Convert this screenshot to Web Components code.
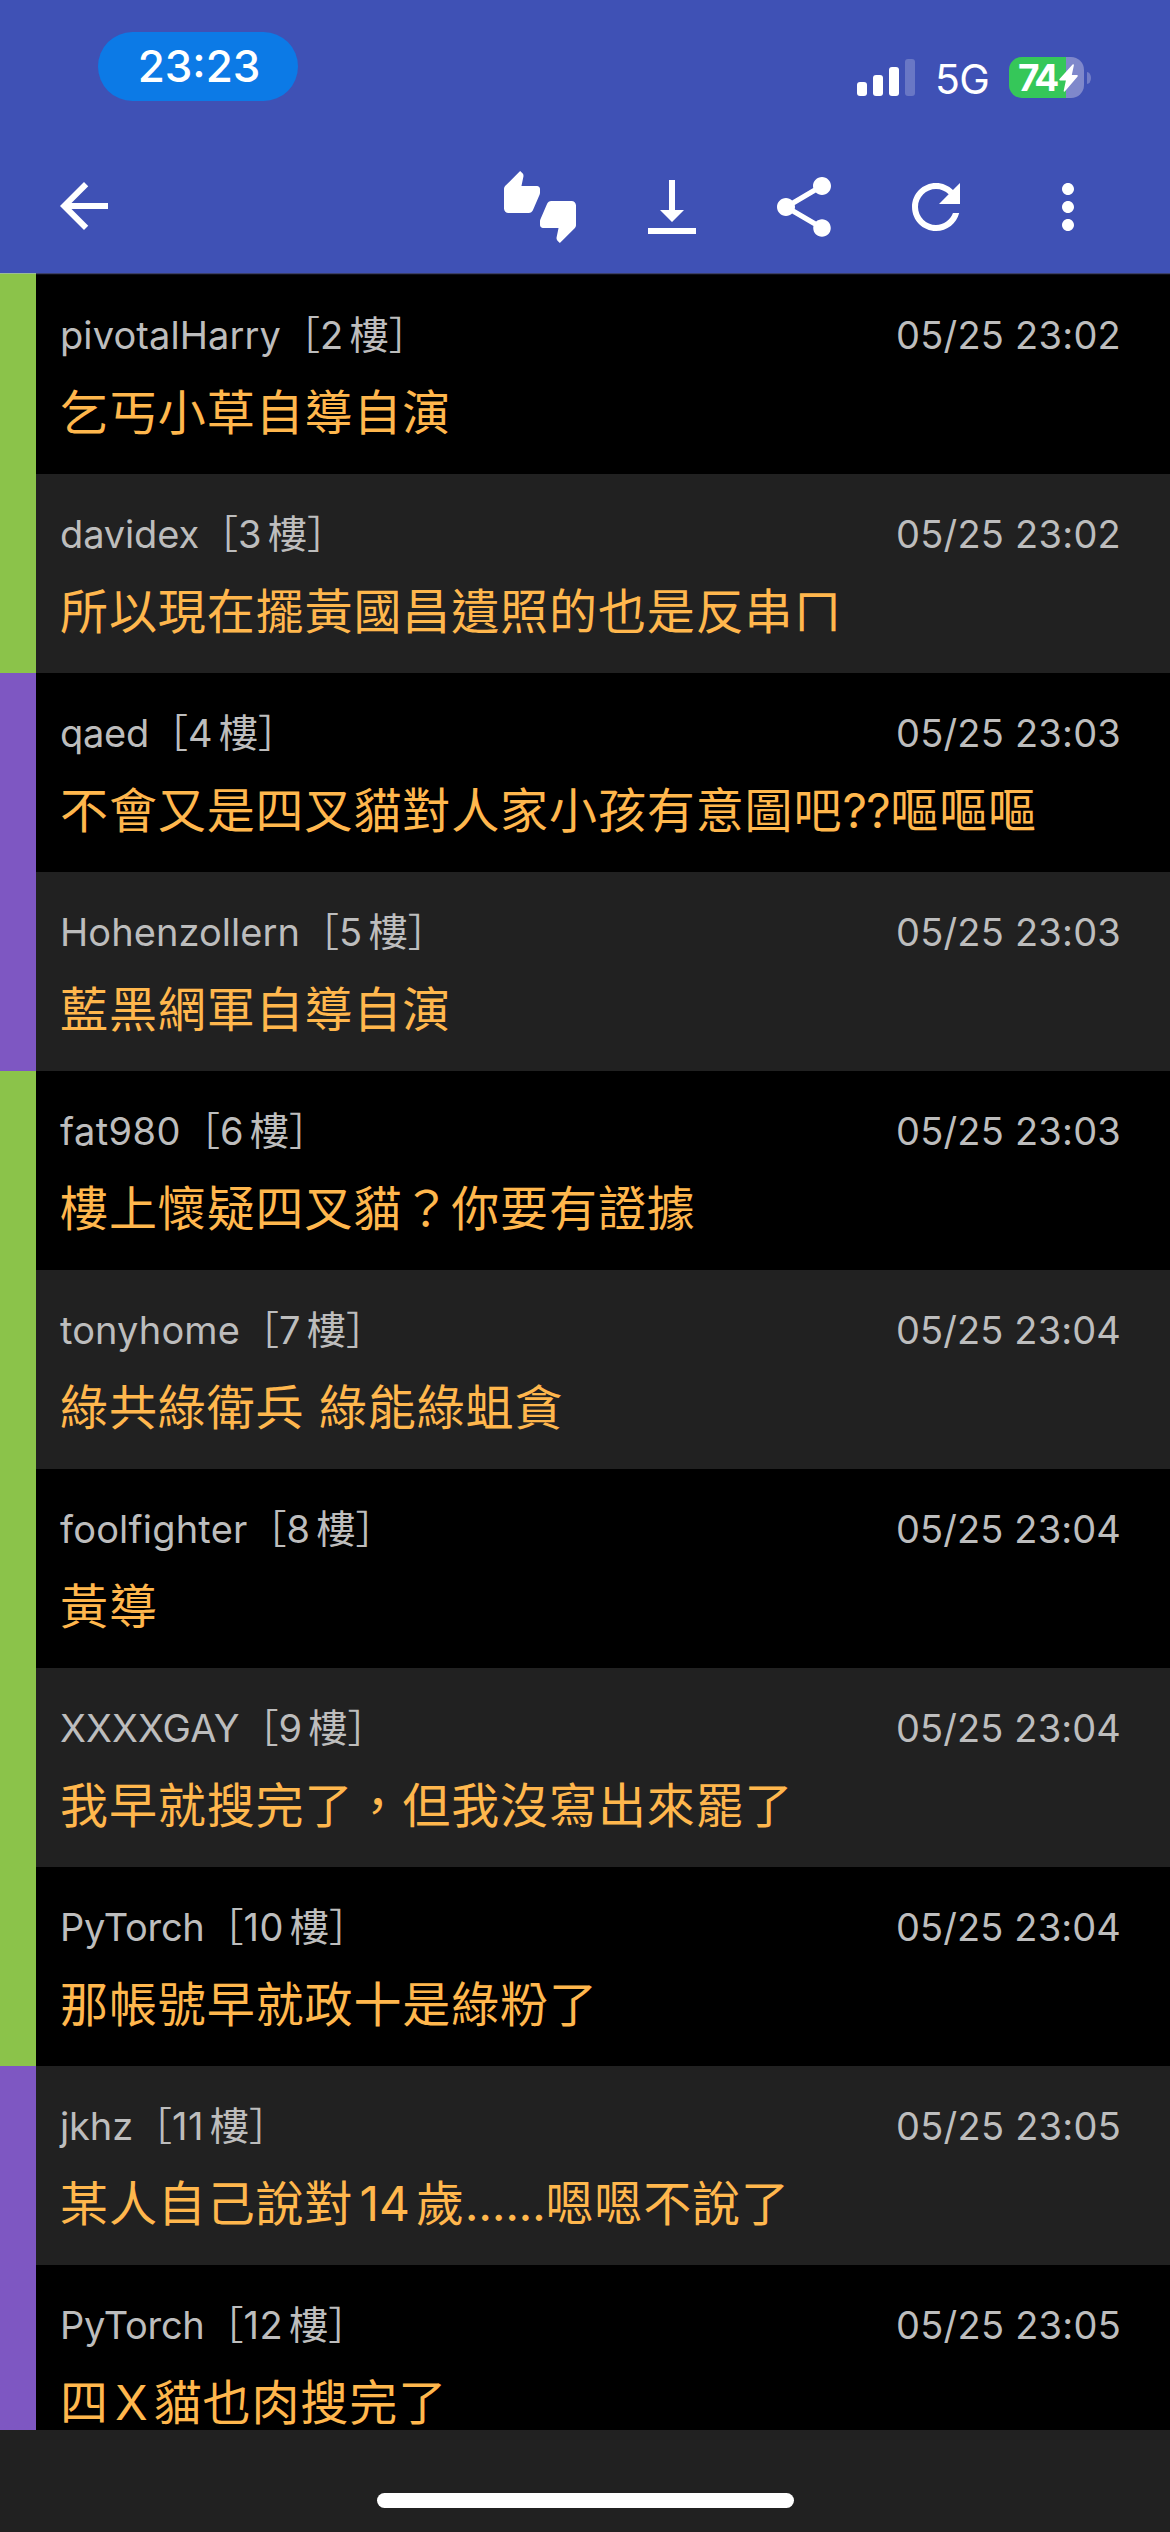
<!DOCTYPE html>
<html lang="zh-Hant">
<head>
<meta charset="utf-8">
<title>推文</title>
<style>
  html, body { margin: 0; background: #212121; }
  body { width: 1170px; height: 2532px; overflow: hidden; font-family: Inter, "Noto Sans CJK TC", sans-serif; }
</style>
</head>
<body>
<comment-screen></comment-screen>

<template id="status-bar">
  <style>
    :host { display: flex; height: 134px; box-sizing: border-box; padding: 32px 79px 0 98px; justify-content: space-between; color: #fff; }
    .time { width: 200px; height: 69px; border-radius: 34.5px; background: #0c7ae6; display: flex; align-items: center; justify-content: center; font-size: 44px; line-height: 69px; font-weight: 450; padding-left: 2px; box-sizing: border-box; }
    .right { display: flex; align-items: flex-start; padding-top: 25px; }
    .signal { display: block; width: 58px; height: 37px; margin-top: 2px; margin-right: 19px; }
    .net { width: 57px; font-size: 41px; line-height: 44px; letter-spacing: -.7px; margin-right: 17px; white-space: nowrap; margin-left: 1px; }
    .battery { display: flex; align-items: center; }
    .cell { width: 75px; height: 41px; border-radius: 13px; background: linear-gradient(90deg, #35c759 57px, #7f88cb 57px); display: flex; align-items: center; box-sizing: border-box; padding-left: 9px; font-size: 37px; font-weight: 700; letter-spacing: -3px; line-height: 41px; }
    .cell svg { width: 19px; height: 28px; margin-left: 3px; }
    .nub { width: 4px; height: 12px; margin-left: 3px; border-radius: 0 4px 4px 0 / 0 6px 6px 0; background: #727dc7; }
  </style>
  <div class="time">23:23</div>
  <div class="right">
    <svg class="signal" viewBox="0 0 58 37" fill="#fff"><rect y="23" width="10" height="14" rx="3"/><rect x="16" y="16" width="10" height="21" rx="3"/><rect x="32" y="8" width="10" height="29" rx="3"/><rect x="48" width="10" height="37" rx="3" opacity=".22"/></svg>
    <span class="net">5G</span>
    <div class="battery">
      <div class="cell"><span>74</span><svg viewBox="0 0 19 28" fill="#fff"><path d="M13.6.6c.6-.7 1.5-.3 1.3.6L12.800 11h5.100c.9 0 1.200.8.700 1.500L6 27.300c-.6.7-1.500.3-1.300-.6L6.900 16.500H1.200c-.9 0-1.200-.8-.7-1.500z"/></svg></div>
      <div class="nub"></div>
    </div>
  </div>
</template>

<template id="icon-button">
  <style>:host { display: block; width: 72px; height: 72px; } svg { display: block; width: 72px; height: 72px; fill: #fff; }</style>
  <svg viewBox="0 0 24 24"><path/></svg>
</template>

<template id="app-bar">
  <style>
    :host { display: flex; height: 139px; box-sizing: border-box; padding: 36px 66px 0 48px; justify-content: space-between; align-items: flex-start; }
    .actions { display: flex; gap: 60px; padding-top: 1px; }
  </style>
  <icon-button name="back"></icon-button>
  <div class="actions">
    <icon-button name="votes"></icon-button>
    <icon-button name="bottom"></icon-button>
    <icon-button name="share"></icon-button>
    <icon-button name="refresh"></icon-button>
    <icon-button name="more"></icon-button>
  </div>
</template>

<template id="comment-row">
  <style>
    :host { display: flex; height: 199px; flex: none; background: #000; }
    :host(:nth-of-type(even)) { background: #212121; }
    .mark { width: 36px; background: #8bc34a; flex: none; }
    :host([kind="arrow"]) .mark { background: #7e57c2; }
    .body { flex: 1; padding: 32px 49px 0 24px; display: flex; flex-direction: column; }
    .head { display: flex; justify-content: space-between; height: 56px; line-height: 56px; font-size: 38px; color: #bdbdbd; white-space: nowrap; }
    .who { display: flex; }
    .floor { font-size: 39px; }
    .floor .n { font-family: Inter; font-size: 38px; margin-right: 6px; letter-spacing: .5px; }
    .msg { margin-top: 25.500px; height: 48px; line-height: 48px; font-size: 48px; letter-spacing: .9px; color: #ffb74d; white-space: nowrap; }
  </style>
  <div class="mark"></div>
  <div class="body">
    <div class="head">
      <div class="who"><span class="name"></span><span class="floor">［<span class="n"></span>樓］</span></div>
      <span class="date"></span>
    </div>
    <div class="msg"><slot></slot></div>
  </div>
</template>

<template id="comment-screen">
  <style>
    :host { display: flex; flex-direction: column; width: 1170px; height: 2532px; background: #212121; }
    header { background: #3f51b5; height: 273px; flex: none; }
    main { display: flex; flex-direction: column; height: 2157px; flex: none; }
    main comment-row:last-child { height: 165px; }
    .edge { display: flex; height: 2px; flex: none; background: linear-gradient(#3a3f68 1px, #101018 1px); }
    .edge::before { content: ""; width: 36px; background: linear-gradient(#9bbb9a 1px, #8bc34a 1px); }
    footer { flex: 1; display: flex; justify-content: center; align-items: flex-start; padding-top: 63px; }
    .home { width: 417px; height: 15px; border-radius: 8px; background: #fff; }
    .latin { margin: 0 6px; letter-spacing: 0; }
    .dots { letter-spacing: -.4px; }
    .marks { letter-spacing: -.6px; }
  </style>
  <header><status-bar></status-bar><app-bar></app-bar></header>
  <main>
    <div class="edge"></div>
    <comment-row user="pivotalHarry" span="221" floor="2" date="05/25 23:02">乞丐小草自導自演</comment-row>
    <comment-row user="davidex" span="139" floor="3" date="05/25 23:02">所以現在擺黃國昌遺照的也是反串ㄇ</comment-row>
    <comment-row kind="arrow" user="qaed" span="89" floor="4" date="05/25 23:03">不會又是四叉貓對人家小孩有意圖吧<span class="marks">??</span>嘔嘔嘔</comment-row>
    <comment-row kind="arrow" user="Hohenzollern" span="240" floor="5" date="05/25 23:03">藍黑網軍自導自演</comment-row>
    <comment-row user="fat980" span="121" floor="6" date="05/25 23:03">樓上懷疑四叉貓？你要有證據</comment-row>
    <comment-row user="tonyhome" span="180" floor="7" date="05/25 23:04">綠共綠衛兵 綠能綠蛆貪</comment-row>
    <comment-row user="foolfighter" span="187.500" floor="8" date="05/25 23:04">黃導</comment-row>
    <comment-row user="XXXXGAY" span="179.500" floor="9" date="05/25 23:04">我早就搜完了，但我沒寫出來罷了</comment-row>
    <comment-row user="PyTorch" span="144.5" floor="10" date="05/25 23:04">那帳號早就政十是綠粉了</comment-row>
    <comment-row kind="arrow" user="jkhz" span="73" floor="11" date="05/25 23:05">某人自己說對<span class="latin">14</span>歲<span class="dots">......</span>嗯嗯不說了</comment-row>
    <comment-row kind="arrow" user="PyTorch" span="144.5" floor="12" date="05/25 23:05">四<span class="latin">X</span>貓也肉搜完了</comment-row>
  </main>
  <footer><div class="home"></div></footer>
</template>

<script>
const ICONS = {
  back: "M20 11H7.830l5.590-5.590L12 4l-8 8 8 8 1.410-1.410L7.830 13H20v-2z",
  votes: "M12 6c0-.55-.45-1-1-1H5.82l.66-3.18.02-.23c0-.31-.13-.59-.33-.8L5.38 0 .44 4.94C.17 5.21 0 5.59 0 6v6.500c0 .83.67 1.500 1.500 1.500h6.750c.62 0 1.150-.38 1.380-.91l2.260-5.290c.07-.17.11-.36.11-.55V6zm10.500 4h-6.750c-.62 0-1.150.38-1.380.91l-2.260 5.290c-.07.17-.11.36-.11.55V18c0 .55.45 1 1 1h5.180l-.66 3.180-.02.24c0 .31.13.59.33.8l.79.78 4.940-4.940c.27-.27.44-.65.44-1.060v-6.500c0-.83-.67-1.500-1.500-1.500z",
  bottom: "M16 13h-3V3h-2v10H8l4 4 4-4zM4 19v2h16v-2H4z",
  share: "M18 16.080c-.76 0-1.440.3-1.960.77L8.910 12.700c.05-.23.09-.46.09-.7s-.04-.47-.09-.7l7.050-4.110c.54.5 1.250.81 2.040.81 1.660 0 3-1.340 3-3s-1.340-3-3-3-3 1.340-3 3c0 .24.04.47.09.7L8.040 9.810C7.500 9.310 6.790 9 6 9c-1.660 0-3 1.340-3 3s1.340 3 3 3c.79 0 1.500-.31 2.040-.81l7.120 4.160c-.05.21-.08.43-.08.65 0 1.610 1.310 2.920 2.920 2.920s2.920-1.310 2.920-2.920-1.310-2.920-2.920-2.920z",
  refresh: "M17.650 6.350C16.200 4.900 14.210 4 12 4c-4.420 0-7.990 3.580-7.990 8s3.570 8 7.990 8c3.730 0 6.840-2.550 7.730-6h-2.080c-.82 2.330-3.040 4-5.650 4-3.310 0-6-2.690-6-6s2.690-6 6-6c1.660 0 3.140.69 4.220 1.780L13 11h7V4l-2.350 2.350z",
  more: "M12 8c1.100 0 2-.9 2-2s-.9-2-2-2-2 .9-2 2 .9 2 2 2zm0 2c-1.100 0-2 .9-2 2s.9 2 2 2 2-.9 2-2-.9-2-2-2zm0 6c-1.100 0-2 .9-2 2s.9 2 2 2 2-.9 2-2-.9-2-2-2z"
};

class Templated extends HTMLElement {
  constructor() {
    super();
    this.attachShadow({ mode: "open" });
  }
  connectedCallback() {
    if (this.shadowRoot.firstChild) return;
    const source = document.getElementById(this.localName);
    this.shadowRoot.append(document.importNode(source.content, true));
    this.fill(selector => this.shadowRoot.querySelector(selector));
  }
  fill() {}
}

// Spreads a label's letters so that its advance equals the given width.
function track(el, width) {
  const natural = el.getBoundingClientRect().width;
  el.style.letterSpacing = (width - natural) / el.textContent.length + "px";
}

class IconButton extends Templated {
  fill($) { $("path").setAttribute("d", ICONS[this.getAttribute("name")]); }
}
class CommentRow extends Templated {
  fill($) {
    $(".name").textContent = this.getAttribute("user");
    $(".n").textContent = this.getAttribute("floor");
    $(".date").textContent = this.getAttribute("date");
    track($(".name"), +this.getAttribute("span"));
    track($(".date"), 225);
  }
}
customElements.define("icon-button", IconButton);
customElements.define("status-bar", class extends Templated {});
customElements.define("app-bar", class extends Templated {});
customElements.define("comment-row", CommentRow);
customElements.define("comment-screen", class extends Templated {});
</script>
</body>
</html>
